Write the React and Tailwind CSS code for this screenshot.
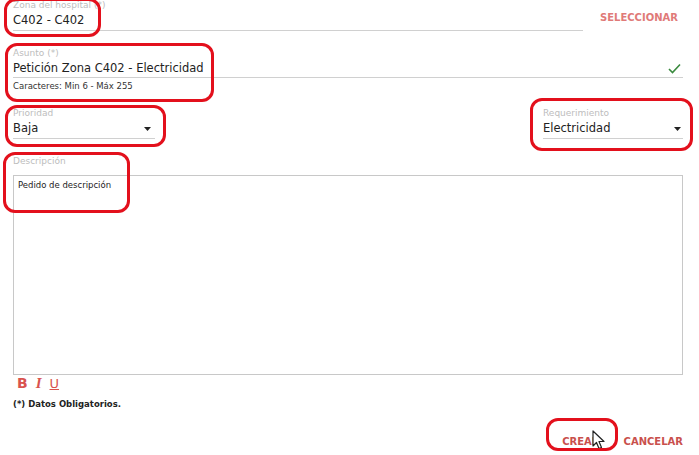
import React from 'react';

const font = { fontFamily: '"DejaVu Sans", Verdana, sans-serif' };

function Caret() {
    return (
        <svg width="7" height="4" viewBox="0 0 7 4" className="shrink-0">
            <path d="M0 0 L7 0 L3.5 4 Z" fill="#222" />
        </svg>
    );
}

function Check() {
    return (
        <svg width="13" height="11" viewBox="0 0 13 11">
            <path d="M1 6 L4.5 9.5 L12 1.5" fill="none" stroke="#3a8a3e" strokeWidth="1.6" />
        </svg>
    );
}

function Cursor() {
    return (
        <svg width="14" height="20" viewBox="0 0 14 20">
            <path d="M1 1 L1 16 L4.5 12.5 L7 18.5 L9.5 17.5 L7 11.5 L12 11.5 Z" fill="#fff" stroke="#222" strokeWidth="1.2" strokeLinejoin="round" />
        </svg>
    );
}

function Oval({ className }) {
    return <div className={`absolute border-[3px] border-[#e3101c] rounded-[12px] pointer-events-none ${className}`} />;
}

export default function App() {
    return (
        <div className="relative w-[699px] h-[455px] bg-white overflow-hidden" style={font}>
            <div className="pl-[13px] pr-[16px]">
                {/* Zona del hospital */}
                <div className="flex items-end">
                    <div className="w-[570px]">
                        <div className="text-[9px] leading-[11px] text-[#bdbdbd] h-[11px]">Zona del hospital (*)</div>
                        <div className="text-[11.5px] leading-[19px] h-[20px] text-[#222] border-b border-[#d0d0d0]">C402 - C402</div>
                    </div>
                    <div className="flex-1 flex justify-end pb-[3px] pr-[5px]">
                        <span className="text-[10px] font-bold text-[#e07a78] -translate-y-[3px]">SELECCIONAR</span>
                    </div>
                </div>

                {/* Asunto */}
                <div className="mt-[17px]">
                    <div className="text-[9px] leading-[11px] text-[#bdbdbd] h-[11px]">Asunto (*)</div>
                    <div className="flex items-center justify-between text-[11.5px] leading-[18px] h-[19px] text-[#222] border-b border-[#d0d0d0]">
                        <span>Petición Zona C402 - Electricidad</span>
                        <span className="pr-[2px]"><Check /></span>
                    </div>
                    <div className="mt-[3px] text-[8.5px] leading-[11px] text-[#333]">Caracteres: Min 6 - Máx 255</div>
                </div>

                {/* Prioridad / Requerimiento */}
                <div className="mt-[16px] flex justify-between">
                    <div className="w-[142px]">
                        <div className="text-[9px] leading-[11px] text-[#bdbdbd] h-[11px]">Prioridad</div>
                        <div className="flex items-center justify-between text-[11.5px] leading-[19px] h-[20px] text-[#222] border-b border-[#d0d0d0] pr-[4px]">
                            <span>Baja</span>
                            <Caret />
                        </div>
                    </div>
                    <div className="w-[140px]">
                        <div className="text-[9px] leading-[11px] text-[#bdbdbd] h-[11px]">Requerimiento</div>
                        <div className="flex items-center justify-between text-[11.5px] leading-[19px] h-[20px] text-[#222] border-b border-[#d0d0d0] pr-[2px]">
                            <span>Electricidad</span>
                            <Caret />
                        </div>
                    </div>
                </div>

                {/* Descripción */}
                <div className="mt-[17px]">
                    <div className="text-[9px] leading-[11px] text-[#bdbdbd] h-[11px]">Descripción</div>
                    <div className="mt-[8px] h-[200px] border border-[#c8c8c8] pl-[4px] pt-[2px] text-[8.5px] leading-[14px] text-[#222]">
                        Pedido de descripción
                    </div>
                    <div className="flex items-center gap-[8px] pl-[4px] mt-[1px] h-[15px] text-[13px] text-[#d9534f]">
                        <span className="font-bold text-[14px]">B</span>
                        <span className="font-bold italic text-[15px]" style={{ fontFamily: '"Liberation Serif", serif' }}>I</span>
                        <span className="underline">U</span>
                    </div>
                    <div className="mt-[8px] text-[8.5px] leading-[11px] font-bold text-[#222]">(*) Datos Obligatorios.</div>
                </div>

                {/* Acciones */}
                <div className="mt-[24px] flex justify-end gap-[24px] text-[10px] font-bold text-[#c9504c]">
                    <span className="relative">
                        CREAR
                        <span className="absolute left-[30px] top-[-4px]"><Cursor /></span>
                    </span>
                    <span>CANCELAR</span>
                </div>
            </div>

            {/* annotation ovals */}
            <Oval className="left-[4px] top-[-2px] w-[97px] h-[39px]" />
            <Oval className="left-[5px] top-[43px] w-[209px] h-[59px]" />
            <Oval className="left-[5px] top-[105px] w-[161px] h-[42px]" />
            <Oval className="left-[530px] top-[98px] w-[163px] h-[53px]" />
            <Oval className="left-[3px] top-[152px] w-[127px] h-[61px]" />
            <Oval className="left-[546px] top-[418px] w-[72px] h-[33px]" />
        </div>
    );
}
